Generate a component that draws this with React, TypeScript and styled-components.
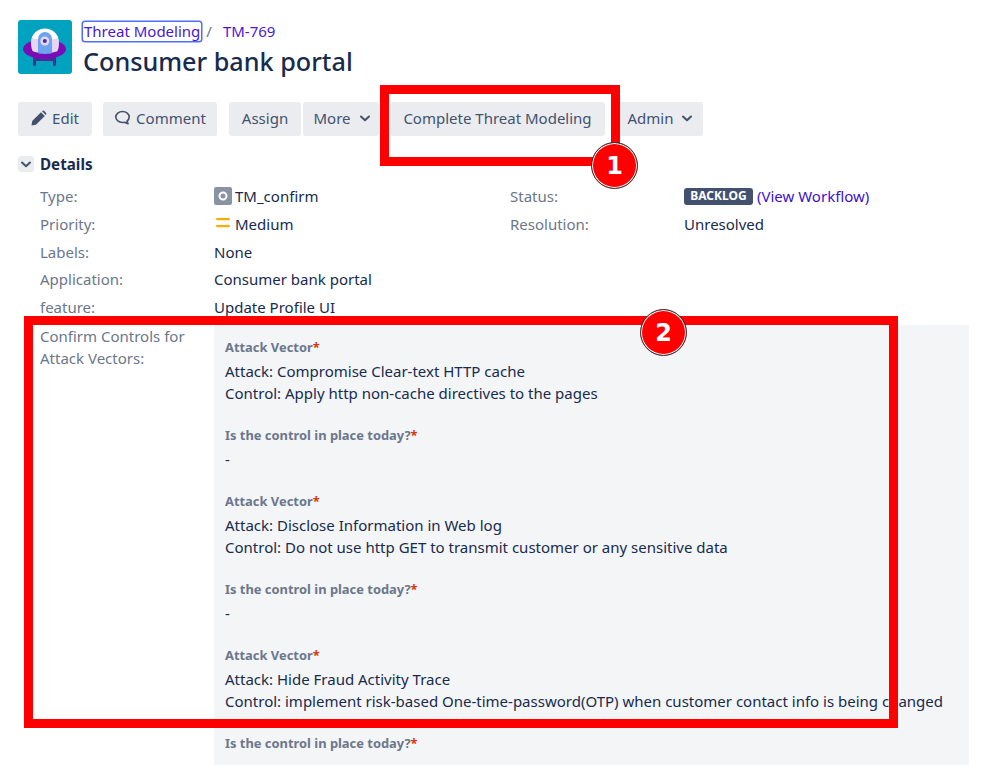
import React from 'react'
import styled, { createGlobalStyle } from 'styled-components'

const GlobalStyle = createGlobalStyle`
  html, body {
    margin: 0;
    padding: 0;
    background: #fff;
  }
  body {
    font-family: "Noto Sans", "Open Sans", sans-serif;
    font-size: 15px;
    color: #172b4d;
  }
`

const Page = styled.div`
  position: relative;
  width: 999px;
  height: 765px;
  overflow: hidden;
  box-sizing: border-box;
  padding: 20px 30px 0 18px;
`

const Header = styled.header`
  display: flex;
  gap: 11px;
  height: 54px;
`

const HeaderText = styled.div`
  display: flex;
  flex-direction: column;
`

const Breadcrumbs = styled.div`
  display: flex;
  align-items: center;
  height: 24px;
  padding-top: 1px;
`

const Crumb = styled.a<{ $focused?: boolean }>`
  color: #4a16d9;
  line-height: 19px;
  padding: 0 1px;
  border-radius: 2px;
  box-shadow: ${p => (p.$focused ? '0 0 0 1.5px #4c6fff' : 'none')};
`

const Slash = styled.span`
  color: #6b778c;
  margin: 0 10px 0 5px;
`

const Title = styled.h1`
  margin: 2px 0 0;
  font-size: 25.2px;
  font-weight: 500;
  line-height: 36px;
  color: #172b4d;
`

const Toolbar = styled.div`
  display: flex;
  margin-top: 28px;
`

const Button = styled.div<{ $width: number; $gap?: number }>`
  display: flex;
  align-items: center;
  justify-content: center;
  gap: 5px;
  box-sizing: border-box;
  width: ${p => p.$width}px;
  height: 34px;
  padding-bottom: 2px;
  margin-right: ${p => p.$gap ?? 11}px;
  background: #ebecf0;
  border-radius: 3px;
  color: #42526e;
`

const Caret = styled.span`
  display: flex;
  margin: 0 -2px 0 3px;
`

const SectionHeading = styled.div`
  display: flex;
  align-items: center;
  gap: 6px;
  margin-top: 20px;
  height: 16px;
`

const Toggle = styled.div`
  display: flex;
  align-items: center;
  justify-content: center;
  width: 16px;
  height: 16px;
  background: #ebecf0;
  border-radius: 3px;
`

const SectionTitle = styled.h2`
  margin: 0;
  font-size: 15.2px;
  font-weight: 700;
  line-height: 16px;
`

const DetailsGrid = styled.div`
  display: grid;
  grid-template-columns: 174px 296px 174px 1fr;
  grid-auto-rows: 22px;
  row-gap: 5.75px;
  margin: 13px 0 0 22px;
  line-height: 22px;
`

const Label = styled.div`
  color: #6b778c;
  line-height: 22px;
`

const Value = styled.div<{ $wide?: boolean }>`
  display: flex;
  align-items: center;
  gap: 3px;
  grid-column: ${p => (p.$wide ? '2 / -1' : 'auto')};
`

const Lozenge = styled.span`
  display: inline-block;
  box-sizing: border-box;
  width: 69px;
  height: 17px;
  margin-right: 1px;
  text-align: center;
  line-height: 15px;
  font-size: 12px;
  font-weight: 700;
  color: #fff;
  background: #42526e;
  border-radius: 3px;
`

const Link = styled.a`
  color: #3d10cf;
`

const ConfirmRow = styled.div`
  display: grid;
  grid-template-columns: 174px 1fr;
  margin: 7px 0 0 22px;
  height: 440px;
`

const Panel = styled.div`
  box-sizing: border-box;
  padding: 12px 0 0 11px;
  background: #f4f5f7;
  height: 440px;
`

const FieldLabel = styled.div`
  font-size: 12.9px;
  font-weight: 700;
  line-height: 20px;
  color: #6b778c;
`

const Required = styled.span`
  color: #de350b;
`

const FieldValue = styled.div`
  margin: 3px 0 21px;
  line-height: 22px;
  white-space: nowrap;
`

const Highlight = styled.div<{ $left: number; $top: number; $width: number; $height: number }>`
  position: absolute;
  left: ${p => p.$left}px;
  top: ${p => p.$top}px;
  width: ${p => p.$width}px;
  height: ${p => p.$height}px;
  box-sizing: border-box;
  border: 9px solid #ff0000;
`

const Marker = styled.div<{ $left: number; $top: number }>`
  position: absolute;
  left: ${p => p.$left}px;
  top: ${p => p.$top}px;
  width: 47px;
  height: 47px;
  box-sizing: border-box;
  display: flex;
  align-items: center;
  justify-content: center;
  background: #ff0000;
  border: 1.5px solid #333;
  box-shadow: inset 0 0 0 1px #fff;
  border-radius: 50%;
  color: #fff;
  font-family: "DejaVu Sans", sans-serif;
  font-size: 24px;
  font-weight: 700;
`

const Logo = () => (
  <svg width="54" height="54" viewBox="0 0 54 54">
    <rect width="54" height="54" rx="3" fill="#00a3bf" />
    <rect x="15" y="36" width="3" height="10" rx="1.500" fill="#403294" />
    <rect x="35" y="36" width="3" height="10" rx="1.500" fill="#403294" />
    <rect x="15" y="37" width="23" height="4" fill="#403294" />
    <ellipse cx="26.500" cy="29" rx="21.500" ry="10" fill="#7a0cb8" />
    <path d="M13 22.500a14 14 0 0 1 28 0c0 3.500-.5 6-1.500 8.500-4 2.500-21 2.500-25 0-1-2.500-1.500-5-1.500-8.500z" fill="#e6d5f3" />
    <path d="M13.800 18a14 14 0 0 1 26.400 0c-4 2-22.400 2-26.400 0z" fill="#fff" />
    <path d="M20 33V19a7 7 0 0 1 14 0v14c-3 1.200-11 1.200-14 0z" fill="#6ea4ef" />
    <circle cx="26.800" cy="21" r="4.500" fill="#e6d5f3" />
    <circle cx="26.800" cy="21" r="2" fill="#403294" />
  </svg>
)

const PencilIcon = () => (
  <svg width="16" height="16" viewBox="0 0 16 16">
    <path d="M.5 15.500l.7-4.500L10 2.200 13.800 6 5 14.800z" fill="#42526e" />
    <path d="M11.200 1.100a1.500 1.500 0 0 1 2.100 0l1.600 1.600a1.500 1.500 0 0 1 0 2.100l-.2.200-3.700-3.700z" fill="#42526e" />
  </svg>
)

const CommentIcon = () => (
  <svg width="17" height="16" viewBox="0 0 17 16" fill="none">
    <path
      d="M8.500 1.500c3.700 0 6.700 2.400 6.700 5.500 0 1.600-.8 3-2.100 4l.9 2.800-3.500-1.500c-.6.100-1.300.2-2 .2-3.700 0-6.700-2.400-6.700-5.500s3-5.500 6.700-5.500z"
      stroke="#42526e"
      strokeWidth="1.600"
      strokeLinejoin="round"
    />
  </svg>
)

const Chevron = () => (
  <svg width="12" height="12" viewBox="0 0 12 12" fill="none">
    <path d="M2 4.500L6 8.200l4-3.700" stroke="#42526e" strokeWidth="2" strokeLinecap="round" strokeLinejoin="round" />
  </svg>
)

const TypeIcon = () => (
  <svg width="18" height="18" viewBox="0 0 18 18">
    <rect width="18" height="18" rx="2" fill="#8993a4" />
    <circle cx="9" cy="9" r="3.500" fill="none" stroke="#fff" strokeWidth="2" />
  </svg>
)

const PriorityIcon = () => (
  <svg width="18" height="18" viewBox="0 0 18 18">
    <rect x="2" y="3" width="14" height="2.200" rx="1.100" fill="#ffab00" />
    <rect x="2" y="10" width="14" height="2.200" rx="1.100" fill="#ffab00" />
  </svg>
)

const vectors = [
  {
    attack: 'Attack: Compromise Clear-text HTTP cache',
    control: 'Control: Apply http non-cache directives to the pages',
  },
  {
    attack: 'Attack: Disclose Information in Web log',
    control: 'Control: Do not use http GET to transmit customer or any sensitive data',
  },
  {
    attack: 'Attack: Hide Fraud Activity Trace',
    control: 'Control: implement risk-based One-time-password(OTP) when customer contact info is being changed',
  },
]

export default function App() {
  return (
    <Page>
      <GlobalStyle />
      <Header>
        <Logo />
        <HeaderText>
          <Breadcrumbs>
            <Crumb $focused>Threat Modeling</Crumb>
            <Slash>/</Slash>
            <Crumb>TM-769</Crumb>
          </Breadcrumbs>
          <Title>Consumer bank portal</Title>
        </HeaderText>
      </Header>

      <Toolbar>
        <Button $width={74}><PencilIcon />Edit</Button>
        <Button $width={114} $gap={12}><CommentIcon />Comment</Button>
        <Button $width={72} $gap={2}>Assign</Button>
        <Button $width={76}>More<Caret><Chevron /></Caret></Button>
        <Button $width={215}>Complete Threat Modeling</Button>
        <Button $width={87} $gap={0}>Admin<Caret><Chevron /></Caret></Button>
      </Toolbar>

      <SectionHeading>
        <Toggle><Chevron /></Toggle>
        <SectionTitle>Details</SectionTitle>
      </SectionHeading>

      <DetailsGrid>
        <Label>Type:</Label>
        <Value><TypeIcon />TM_confirm</Value>
        <Label>Status:</Label>
        <Value><Lozenge>BACKLOG</Lozenge><Link>(View Workflow)</Link></Value>
        <Label>Priority:</Label>
        <Value><PriorityIcon />Medium</Value>
        <Label>Resolution:</Label>
        <Value>Unresolved</Value>
        <Label>Labels:</Label>
        <Value $wide>None</Value>
        <Label>Application:</Label>
        <Value $wide>Consumer bank portal</Value>
        <Label>feature:</Label>
        <Value $wide>Update Profile UI</Value>
      </DetailsGrid>

      <ConfirmRow>
        <Label>Confirm Controls for<br />Attack Vectors:</Label>
        <Panel>
          {vectors.map((v, i) => (
            <div key={v.attack}>
              <FieldLabel>Attack Vector<Required>*</Required></FieldLabel>
              <FieldValue>{v.attack}<br />{v.control}</FieldValue>
              <FieldLabel>Is the control in place today?<Required>*</Required></FieldLabel>
              {i < vectors.length - 1 && <FieldValue>-</FieldValue>}
            </div>
          ))}
        </Panel>
      </ConfirmRow>

      <Highlight $left={380} $top={85} $width={240} $height={81} />
      <Highlight $left={24} $top={316} $width={874} $height={412} />
      <Marker $left={591} $top={142}>1</Marker>
      <Marker $left={640} $top={309}>2</Marker>
    </Page>
  )
}
